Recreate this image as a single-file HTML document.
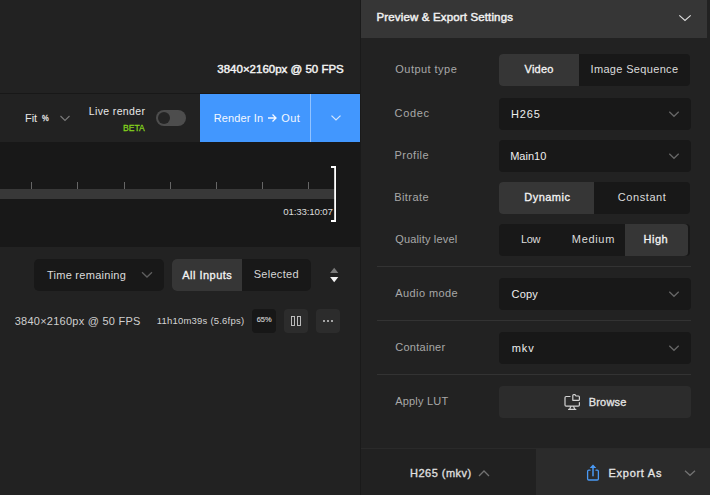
<!DOCTYPE html>
<html><head><meta charset="utf-8">
<style>
*{box-sizing:border-box;margin:0;padding:0}
html,body{width:710px;height:495px;overflow:hidden;background:#222222}
body{position:relative;font-family:"Liberation Sans",sans-serif;color:#e6e6e6}
.a{position:absolute}
.t{position:absolute;white-space:nowrap;line-height:1}
svg{position:absolute;left:0;top:0;overflow:visible}
.dd{position:absolute;left:499px;width:192px;height:32px;background:#181818;border-radius:4px}
.seg{position:absolute;left:499px;width:191px;height:32px;background:#181818;border-radius:4px;overflow:hidden}
.seg .on{position:absolute;top:0;height:32px;background:#363636}
.div{position:absolute;left:377px;width:314px;height:1px;background:#333333}
.tick{position:absolute;top:182px;width:1px;height:7px;background:#666666}
</style></head><body>

<!-- LEFT PANEL -->
<div class="a" style="left:0;top:93px;width:360px;height:1px;background:#181818"></div>

<!-- Live render toggle -->
<div class="a" style="left:156px;top:110px;width:30px;height:16px;border-radius:8px;background:#4d4d4d"></div>
<div class="a" style="left:158px;top:112px;width:12px;height:12px;border-radius:6px;background:#242424"></div>

<!-- Render button -->
<div class="a" style="left:200px;top:94px;width:160px;height:48px;background:#4297fe"></div>
<div class="a" style="left:310px;top:94px;width:1px;height:48px;background:#92c3ff"></div>

<!-- Timeline -->
<div class="a" style="left:0;top:142px;width:360px;height:105px;background:#181818"></div>
<div class="a" style="left:0;top:189px;width:335px;height:10px;background:#383838"></div>
<div class="tick" style="left:31px"></div>
<div class="tick" style="left:77px"></div>
<div class="tick" style="left:124px"></div>
<div class="tick" style="left:170px"></div>
<div class="tick" style="left:216px"></div>
<div class="tick" style="left:262px"></div>
<div class="tick" style="left:308px"></div>

<!-- Filter row -->
<div class="a" style="left:34px;top:259px;width:130px;height:32px;background:#181818;border-radius:5px"></div>
<div class="a" style="left:172px;top:259px;width:139px;height:32px;background:#181818;border-radius:5px;overflow:hidden">
  <div class="a" style="left:0;top:0;width:70px;height:32px;background:#363636"></div>
</div>

<!-- Info row boxes -->
<div class="a" style="left:252px;top:309px;width:24px;height:24px;background:#171717;border-radius:4px"></div>
<div class="a" style="left:284px;top:309px;width:24px;height:24px;background:#2c2c2c;border-radius:4px"></div>
<div class="a" style="left:316px;top:309px;width:24px;height:24px;background:#2c2c2c;border-radius:4px"></div>
<div class="a" style="left:323px;top:320px;width:2px;height:2px;background:#a4a4a4"></div>
<div class="a" style="left:327px;top:320px;width:2px;height:2px;background:#a4a4a4"></div>
<div class="a" style="left:331px;top:320px;width:2px;height:2px;background:#a4a4a4"></div>

<!-- border between panels -->
<div class="a" style="left:360px;top:0;width:1px;height:495px;background:#1a1a1a"></div>

<!-- RIGHT PANEL -->
<div class="a" style="left:361px;top:0;width:346px;height:38px;background:#363636"></div>

<div class="seg" style="top:54px"><div class="on" style="left:0;width:80px"></div></div>
<div class="dd" style="top:98px"></div>
<div class="dd" style="top:140px"></div>
<div class="seg" style="top:182px"><div class="on" style="left:0;width:95px"></div></div>
<div class="seg" style="top:224px"><div class="on" style="left:126px;width:63px;border-radius:0 4px 4px 0"></div></div>
<div class="div" style="top:266px"></div>
<div class="dd" style="top:278px"></div>
<div class="div" style="top:320px"></div>
<div class="dd" style="top:332px"></div>
<div class="div" style="top:374px"></div>
<div class="a" style="left:499px;top:386px;width:192px;height:32px;background:#2c2c2c;border-radius:4px"></div>

<!-- bottom bar -->
<div class="a" style="left:361px;top:448px;width:349px;height:1px;background:#2a2a2a"></div>
<div class="a" style="left:361px;top:449px;width:175px;height:46px;background:#212121"></div>
<div class="a" style="left:536px;top:449px;width:174px;height:46px;background:#2b2b2b"></div>

<div class="t" id="info_top" style="left:217.30px;top:64.08px;font-size:11.5px;font-weight:400;-webkit-text-stroke:0.45px #f2f2f2;color:#f2f2f2;letter-spacing:0.000px;">3840×2160px @ 50 FPS</div>
<div class="t" id="hdr" style="left:376.50px;top:11.98px;font-size:11.5px;font-weight:400;-webkit-text-stroke:0.45px #f0f0f0;color:#f0f0f0;letter-spacing:0.146px;">Preview &amp; Export Settings</div>
<div class="t" id="lbl_out" style="left:395.30px;top:63.74px;font-size:11px;font-weight:400;color:#a8a8a8;letter-spacing:0.460px;">Output type</div>
<div class="t" id="v_video" style="left:524.50px;top:64.14px;font-size:11px;font-weight:400;-webkit-text-stroke:0.3px #f4f4f4;color:#f4f4f4;letter-spacing:0.250px;">Video</div>
<div class="t" id="v_imgseq" style="left:590.50px;top:64.44px;font-size:11px;font-weight:400;color:#dcdcdc;letter-spacing:0.338px;">Image Sequence</div>
<div class="t" id="lbl_codec" style="left:394.60px;top:107.84px;font-size:11px;font-weight:400;color:#a8a8a8;letter-spacing:0.650px;">Codec</div>
<div class="t" id="v_h265" style="left:510.90px;top:109.14px;font-size:11px;font-weight:400;color:#eeeeee;letter-spacing:0.867px;">H265</div>
<div class="t" id="lbl_prof" style="left:394.50px;top:149.54px;font-size:11px;font-weight:400;color:#a8a8a8;letter-spacing:0.500px;">Profile</div>
<div class="t" id="v_main10" style="left:510.20px;top:151.14px;font-size:11px;font-weight:400;color:#eeeeee;letter-spacing:-0.000px;">Main10</div>
<div class="t" id="lbl_bit" style="left:394.20px;top:192.44px;font-size:11px;font-weight:400;color:#a8a8a8;letter-spacing:0.450px;">Bitrate</div>
<div class="t" id="v_dyn" style="left:524.30px;top:192.44px;font-size:11px;font-weight:400;-webkit-text-stroke:0.3px #f4f4f4;color:#f4f4f4;letter-spacing:0.467px;">Dynamic</div>
<div class="t" id="v_const" style="left:617.80px;top:192.44px;font-size:11px;font-weight:400;color:#dcdcdc;letter-spacing:0.571px;">Constant</div>
<div class="t" id="lbl_q" style="left:395.20px;top:234.44px;font-size:11px;font-weight:400;color:#a8a8a8;letter-spacing:0.167px;">Quality level</div>
<div class="t" id="v_low" style="left:521.10px;top:233.54px;font-size:11px;font-weight:400;color:#dcdcdc;letter-spacing:-0.400px;">Low</div>
<div class="t" id="v_med" style="left:571.80px;top:233.54px;font-size:11px;font-weight:400;color:#dcdcdc;letter-spacing:0.680px;">Medium</div>
<div class="t" id="v_high" style="left:643.60px;top:233.54px;font-size:11px;font-weight:400;-webkit-text-stroke:0.3px #f4f4f4;color:#f4f4f4;letter-spacing:0.467px;">High</div>
<div class="t" id="lbl_audio" style="left:395.20px;top:288.34px;font-size:11px;font-weight:400;color:#a8a8a8;letter-spacing:0.422px;">Audio mode</div>
<div class="t" id="v_copy" style="left:511.50px;top:288.74px;font-size:11px;font-weight:400;color:#eeeeee;letter-spacing:0.200px;">Copy</div>
<div class="t" id="lbl_cont" style="left:395.20px;top:341.74px;font-size:11px;font-weight:400;color:#a8a8a8;letter-spacing:0.275px;">Container</div>
<div class="t" id="v_mkv" style="left:511.80px;top:343.04px;font-size:11px;font-weight:400;color:#eeeeee;letter-spacing:0.900px;">mkv</div>
<div class="t" id="lbl_lut" style="left:395.20px;top:395.84px;font-size:11px;font-weight:400;color:#a8a8a8;letter-spacing:0.200px;">Apply LUT</div>
<div class="t" id="v_browse" style="left:588.80px;top:397.34px;font-size:11px;font-weight:400;-webkit-text-stroke:0.3px #e6e6e6;color:#e6e6e6;letter-spacing:0.160px;">Browse</div>
<div class="t" id="v_h265mkv" style="left:410.10px;top:467.66px;font-size:11px;font-weight:400;-webkit-text-stroke:0.3px #e0e0e0;color:#e0e0e0;letter-spacing:0.467px;">H265 (mkv)</div>
<div class="t" id="v_export" style="left:608.50px;top:467.64px;font-size:11px;font-weight:400;-webkit-text-stroke:0.3px #e6e6e6;color:#e6e6e6;letter-spacing:0.725px;">Export As</div>
<div class="t" id="fit" style="left:25.10px;top:113.44px;font-size:11px;font-weight:400;color:#e6e6e6;letter-spacing:-0.100px;">Fit</div>
<div class="t" id="live" style="left:88.80px;top:105.72px;font-size:10.5px;font-weight:400;color:#e8e8e8;letter-spacing:0.360px;">Live render</div>
<div class="t" id="beta" style="left:122.50px;top:123.26px;font-size:9.5px;font-weight:400;-webkit-text-stroke:0.3px #84d11c;color:#84d11c;letter-spacing:0.000px;transform:scaleX(0.9);transform-origin:0 0">BETA</div>
<div class="t" id="render" style="left:213.70px;top:112.74px;font-size:11px;font-weight:400;color:#f4f8ff;letter-spacing:0.148px;">Render In</div>
<div class="t" id="out" style="left:281.30px;top:112.74px;font-size:11px;font-weight:400;color:#f4f8ff;letter-spacing:0.350px;">Out</div>
<div class="t" id="pctsign" style="left:42.30px;top:112.98px;font-size:9.5px;font-weight:400;-webkit-text-stroke:0.3px #e6e6e6;color:#e6e6e6;letter-spacing:0.000px;transform:scaleX(0.8);transform-origin:0 0">%</div>
<div class="t" id="tc" style="left:283.30px;top:206.98px;font-size:9.7px;font-weight:400;color:#dcdcdc;letter-spacing:-0.150px;">01:33:10:07</div>
<div class="t" id="time" style="left:46.90px;top:269.84px;font-size:11px;font-weight:400;color:#dcdcdc;letter-spacing:0.277px;">Time remaining</div>
<div class="t" id="allin" style="left:182.30px;top:270.34px;font-size:11px;font-weight:400;-webkit-text-stroke:0.3px #f4f4f4;color:#f4f4f4;letter-spacing:0.478px;">All Inputs</div>
<div class="t" id="sel" style="left:253.70px;top:269.34px;font-size:11px;font-weight:400;color:#d6d6d6;letter-spacing:0.286px;">Selected</div>
<div class="t" id="info_row" style="left:14.70px;top:315.64px;font-size:11px;font-weight:400;color:#cfcfcf;letter-spacing:0.253px;">3840×2160px @ 50 FPS</div>
<div class="t" id="eta" style="left:156.70px;top:315.90px;font-size:9.5px;font-weight:400;color:#d4d4d4;letter-spacing:0.212px;">11h10m39s (5.6fps)</div>
<div class="t" id="pct" style="left:256.70px;top:316.40px;font-size:7.5px;font-weight:400;-webkit-text-stroke:0.15px #cfcfcf;color:#cfcfcf;letter-spacing:0.000px;">65%</div>

<svg width="710" height="495">
  <g fill="none" stroke-width="1.2">
    <path d="M60.5 116 L65 120.5 L69.5 116" stroke="#7a7a7a" stroke-width="1.1"/>
    <path d="M331.5 115.6 L336 119.9 L340.5 115.6" stroke="#d3e6fe" stroke-width="1.3"/>
    <path d="M268 118 L276 118 M272.5 114.5 L276 118 L272.5 121.5" stroke="#f4f8ff" stroke-width="1.3"/>
    <path d="M142 272.3 L147 277 L152 272.3" stroke="#5e5e5e" stroke-width="1.3"/>
    <path d="M679.3 15.3 L685 20.5 L690.7 15.3" stroke="#dcdcdc" stroke-width="1.15"/>
    <path d="M669.3 111.8 L674 116.3 L678.7 111.8" stroke="#666666" stroke-width="1.3"/>
    <path d="M669.3 153.8 L674 158.3 L678.7 153.8" stroke="#666666" stroke-width="1.3"/>
    <path d="M669.3 291.8 L674 296.3 L678.7 291.8" stroke="#666666" stroke-width="1.3"/>
    <path d="M669.3 345.8 L674 350.3 L678.7 345.8" stroke="#666666" stroke-width="1.3"/>
    <path d="M479 476 L484 471 L489 476" stroke="#727272" stroke-width="1.3"/>
    <path d="M685 470.8 L690 475.3 L695 470.8" stroke="#727272" stroke-width="1.3"/>
  </g>
  <path d="M331 167 L335.1 167 L335.1 221 L331 221" fill="none" stroke="#ffffff" stroke-width="1.8"/>
  <path d="M334.2 267.8 L338.3 273 L330.1 273 Z" fill="#7a7a7a"/>
  <path d="M330.1 277 L338.3 277 L334.2 282.2 Z" fill="#f4f4f4"/>
  <g fill="none" stroke="#c4c4c4" stroke-width="0.95">
    <rect x="291.5" y="316.5" width="3" height="9"/>
    <rect x="297.5" y="316.5" width="3" height="9"/>
  </g>
  <g fill="none" stroke="#d2d2d2" stroke-width="1.2" stroke-linejoin="round" stroke-linecap="round">
    <path d="M570 396.5 H566.2 Q565 396.5 565 397.7 V405 Q565 406.2 566.2 406.2 H578.2 Q579.4 406.2 579.4 405 V402.6"/>
    <path d="M570.8 406.6 L569.6 409.2 M573.6 406.6 L574.8 409.2 M568.6 409.4 H575.8"/>
    <path d="M572.8 400.3 V395.6 Q572.8 394.7 573.7 394.7 H575 L576 396 H578.5 Q579.4 396 579.4 396.9 V399.4 Q579.4 400.3 578.5 400.3 Z"/>
  </g>
  <g fill="none" stroke="#4a9af5" stroke-width="1.3" stroke-linecap="round">
    <path d="M590 470.2 H588.8 Q587.6 470.2 587.6 471.4 V478.8 Q587.6 480 588.8 480 H597.2 Q598.4 480 598.4 478.8 V471.4 Q598.4 470.2 597.2 470.2 H596"/>
    <path d="M593 467.5 V475.8" stroke-width="1.5"/>
  </g>
  <path d="M593 464.6 L596.3 468 H589.7 Z" fill="#4a9af5"/>
</svg>
</body></html>
